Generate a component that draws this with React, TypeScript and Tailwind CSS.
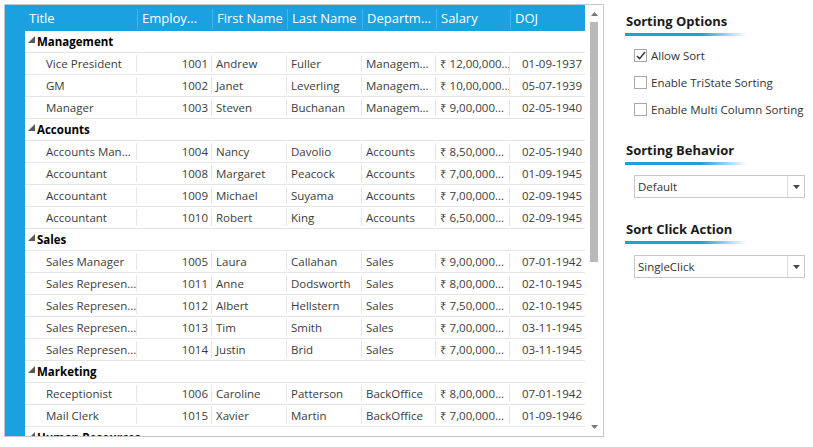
import type { ReactNode } from "react";

type Row = {
  title: string;
  id: number;
  first: string;
  last: string;
  dept: string;
  salary: string;
  doj: string;
};

type Group = { name: string; rows: Row[] };

const groups: Group[] = [
  {
    name: "Management",
    rows: [
      { title: "Vice President", id: 1001, first: "Andrew", last: "Fuller", dept: "Managem...", salary: "₹ 12,00,000...", doj: "01-09-1937" },
      { title: "GM", id: 1002, first: "Janet", last: "Leverling", dept: "Managem...", salary: "₹ 10,00,000...", doj: "05-07-1939" },
      { title: "Manager", id: 1003, first: "Steven", last: "Buchanan", dept: "Managem...", salary: "₹ 9,00,000...", doj: "02-05-1940" },
    ],
  },
  {
    name: "Accounts",
    rows: [
      { title: "Accounts Man...", id: 1004, first: "Nancy", last: "Davolio", dept: "Accounts", salary: "₹ 8,50,000...", doj: "02-05-1940" },
      { title: "Accountant", id: 1008, first: "Margaret", last: "Peacock", dept: "Accounts", salary: "₹ 7,00,000...", doj: "01-09-1945" },
      { title: "Accountant", id: 1009, first: "Michael", last: "Suyama", dept: "Accounts", salary: "₹ 7,00,000...", doj: "02-09-1945" },
      { title: "Accountant", id: 1010, first: "Robert", last: "King", dept: "Accounts", salary: "₹ 6,50,000...", doj: "02-09-1945" },
    ],
  },
  {
    name: "Sales",
    rows: [
      { title: "Sales Manager", id: 1005, first: "Laura", last: "Callahan", dept: "Sales", salary: "₹ 9,00,000...", doj: "07-01-1942" },
      { title: "Sales Represen...", id: 1011, first: "Anne", last: "Dodsworth", dept: "Sales", salary: "₹ 8,00,000...", doj: "02-10-1945" },
      { title: "Sales Represen...", id: 1012, first: "Albert", last: "Hellstern", dept: "Sales", salary: "₹ 7,50,000...", doj: "02-10-1945" },
      { title: "Sales Represen...", id: 1013, first: "Tim", last: "Smith", dept: "Sales", salary: "₹ 7,00,000...", doj: "03-11-1945" },
      { title: "Sales Represen...", id: 1014, first: "Justin", last: "Brid", dept: "Sales", salary: "₹ 7,00,000...", doj: "03-11-1945" },
    ],
  },
  {
    name: "Marketing",
    rows: [
      { title: "Receptionist", id: 1006, first: "Caroline", last: "Patterson", dept: "BackOffice", salary: "₹ 8,00,000...", doj: "07-01-1942" },
      { title: "Mail Clerk", id: 1015, first: "Xavier", last: "Martin", dept: "BackOffice", salary: "₹ 7,00,000...", doj: "01-09-1946" },
    ],
  },
  { name: "Human Resources", rows: [] },
];

const headers = [
  { label: "Title", w: "w-[112px]" },
  { label: "Employ...", w: "w-[75px]" },
  { label: "First Name", w: "w-[75px]" },
  { label: "Last Name", w: "w-[75px]" },
  { label: "Departm...", w: "w-[74px]" },
  { label: "Salary", w: "w-[74px]" },
  { label: "DOJ", w: "w-[75px]" },
];

function Cell({ w, right, children, last }: { w: string; right?: boolean; children: ReactNode; last?: boolean }) {
  return (
    <div
      className={`${w} shrink-0 overflow-hidden whitespace-nowrap ${right ? "pr-[3px] text-right" : "pl-[4px]"} ${
        last ? "" : "border-r border-[#e6e6e6]"
      }`}
    >
      {children}
    </div>
  );
}

function Triangle() {
  return (
    <svg width="8" height="8" viewBox="0 0 8 8" className="mr-[1px] mb-[3px]">
      <path d="M7 0 L7 7 L0 7 Z" fill="#595959" />
    </svg>
  );
}

function GroupRow({ name }: { name: string }) {
  return (
    <div className="flex h-[22px] items-center border-b border-[#e6e6e6] pl-[3px] text-[11.5px] font-bold text-black">
      <Triangle />
      {name}
    </div>
  );
}

function DataRow({ r }: { r: Row }) {
  return (
    <div className="flex h-[22px] items-center border-b border-[#e6e6e6] text-[11.5px] text-[#3c3c3c]">
      <Cell w="w-[112px]">
        <span className="pl-[17px]">{r.title}</span>
      </Cell>
      <Cell w="w-[75px]" right>
        {r.id}
      </Cell>
      <Cell w="w-[75px]">{r.first}</Cell>
      <Cell w="w-[75px]">{r.last}</Cell>
      <Cell w="w-[74px]">{r.dept}</Cell>
      <Cell w="w-[74px]">{r.salary}</Cell>
      <Cell w="w-[75px]" right last>
        {r.doj}
      </Cell>
    </div>
  );
}

function Heading({ children }: { children: ReactNode }) {
  return (
    <div className="flex flex-col">
      <div className="pl-[1px] text-[13px] leading-[18px] font-bold text-[#1a1a1a]">{children}</div>
      <div className="mt-[3px] h-[3px] w-[122px] bg-[linear-gradient(90deg,#1ba1e2_0%,#1ba1e2_62%,rgba(27,161,226,0)_100%)]" />
    </div>
  );
}

function Check({ checked, label }: { checked?: boolean; label: string }) {
  return (
    <div className="flex h-[27px] items-center pl-[9px]">
      <div className="flex h-[13px] w-[13px] items-center justify-center border border-[#a8a8a8] bg-white">
        {checked && (
          <svg width="10" height="9" viewBox="0 0 10 9">
            <path d="M1 5 L3.6 7.6 L9 1" fill="none" stroke="#333" strokeWidth="1.4" />
          </svg>
        )}
      </div>
      <span className="ml-[4px] text-[11.5px] text-[#333]">{label}</span>
    </div>
  );
}

function Dropdown({ value }: { value: string }) {
  return (
    <div className="ml-[9px] flex h-[23px] w-[171px] items-center border border-[#c8c8c8] bg-white">
      <span className="flex-1 pl-[3px] text-[11.5px] text-[#333]">{value}</span>
      <div className="flex h-full w-[17px] items-center justify-center border-l border-[#dcdcdc]">
        <svg width="7" height="4" viewBox="0 0 7 4">
          <path d="M0 0 L7 0 L3.5 4 Z" fill="#444" />
        </svg>
      </div>
    </div>
  );
}

export default function App() {
  return (
    <div className="flex h-[447px] w-[813px] bg-white font-['Open_Sans','Noto_Sans',sans-serif]">
      <div className="mt-[4px] ml-[4px] flex h-[433px] w-[600px] border border-[#c8c8c8]">
        <div className="flex w-[20px] shrink-0 bg-[#1ba1e2]" />
        <div className="flex w-[560px] shrink-0 flex-col overflow-hidden">
          <div className="flex h-[26px] shrink-0 items-center bg-[#1ba1e2] pt-[2px] text-[13px] text-white">
            {headers.map((h) => (
              <div key={h.label} className={`${h.w} shrink-0 overflow-hidden border-l border-[#46b3e8] pl-[4px] whitespace-nowrap first:border-l-0`}>
                {h.label}
              </div>
            ))}
          </div>
          <div className="flex flex-col">
            {groups.map((g) => (
              <div key={g.name} className="flex flex-col">
                <GroupRow name={g.name} />
                {g.rows.map((r) => (
                  <DataRow key={r.id} r={r} />
                ))}
              </div>
            ))}
          </div>
        </div>
        <div className="flex w-[18px] shrink-0 flex-col items-center">
          <svg width="7" height="4" viewBox="0 0 7 4" className="mt-[7px]">
            <path d="M3.5 0 L7 4 L0 4 Z" fill="#777" />
          </svg>
          <div className="mt-[6px] h-[240px] w-[8px] bg-[#b9b9b9]" />
          <div className="flex-1" />
          <svg width="7" height="4" viewBox="0 0 7 4" className="mb-[7px]">
            <path d="M0 0 L7 0 L3.5 4 Z" fill="#777" />
          </svg>
        </div>
      </div>
      <div className="ml-[21px] flex flex-col pt-[12px]">
        <Heading>Sorting Options</Heading>
        <div className="mt-[6px] flex flex-col">
          <Check checked label="Allow Sort" />
          <Check label="Enable TriState Sorting" />
          <Check label="Enable Multi Column Sorting" />
        </div>
        <div className="mt-[18px]">
          <Heading>Sorting Behavior</Heading>
        </div>
        <div className="mt-[10px]">
          <Dropdown value="Default" />
        </div>
        <div className="mt-[22px]">
          <Heading>Sort Click Action</Heading>
        </div>
        <div className="mt-[11px]">
          <Dropdown value="SingleClick" />
        </div>
      </div>
    </div>
  );
}
